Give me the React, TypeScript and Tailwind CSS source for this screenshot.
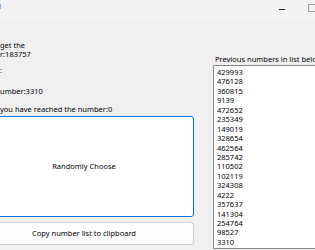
import React from "react";

const numbers = [
  "429993", "476128", "360815", "9139", "472652", "235349", "149019", "328654",
  "462564", "285742", "110502", "102119", "324308", "4222", "357637", "141304",
  "254764", "98527", "3310",
];

function App() {
  return (
    <div className="w-[315px] h-[250px] bg-[#f0f0f0] overflow-hidden relative text-[7.5px] leading-[9px] text-black font-['Noto_Sans','Liberation_Sans',sans-serif]">
      <div className="h-[22px] bg-[#f3f3f3] flex items-start">
        <span className="pt-[2px] -ml-[1px] text-[#222]">l</span>
        <div className="ml-auto flex items-center gap-[23px] pt-[6px]">
          <div className="w-[6px] h-[1px] bg-[#222]" />
          <div className="w-[8px] h-[8px] border border-[#999] -mr-[1px] -mt-[2px]" />
        </div>
      </div>
      <div className="flex">
        <div className="w-[220px] shrink-0 -ml-[26px] flex flex-col">
          <div className="pl-[26px] pt-[19px]">
            <div className="h-[9px]">get the</div>
            <div className="h-[9px]">r:183757</div>
            <div className="h-[9px] mt-[7px]">:</div>
            <div className="h-[9px] mt-[12px]">umber:3310</div>
            <div className="h-[9px] mt-[9px]">you have reached the number:0</div>
          </div>
          <button className="mt-[2px] h-[101px] bg-white border border-[#0078d4] rounded-[3px] text-[7.5px]">
            Randomly Choose
          </button>
          <button className="mt-[5px] h-[23px] bg-[#fdfdfd] border border-[#d0d0d0] rounded-[3px] text-[7.5px]">
            Copy number list to clipboard
          </button>
        </div>
        <div className="ml-[19px] shrink-0 flex flex-col pt-[33px]">
          <div className="h-[9px] pl-[2px] whitespace-nowrap">Previous numbers in list below</div>
          <div className="mt-[1px] w-[120px] h-[184px] bg-white border border-[#828790] pt-[2px] pl-[3px]">
            {numbers.map((n) => (
              <div key={n} className="h-[9.44px] leading-[9.44px]">
                {n}
              </div>
            ))}
          </div>
        </div>
      </div>
    </div>
  );
}

export default App;
